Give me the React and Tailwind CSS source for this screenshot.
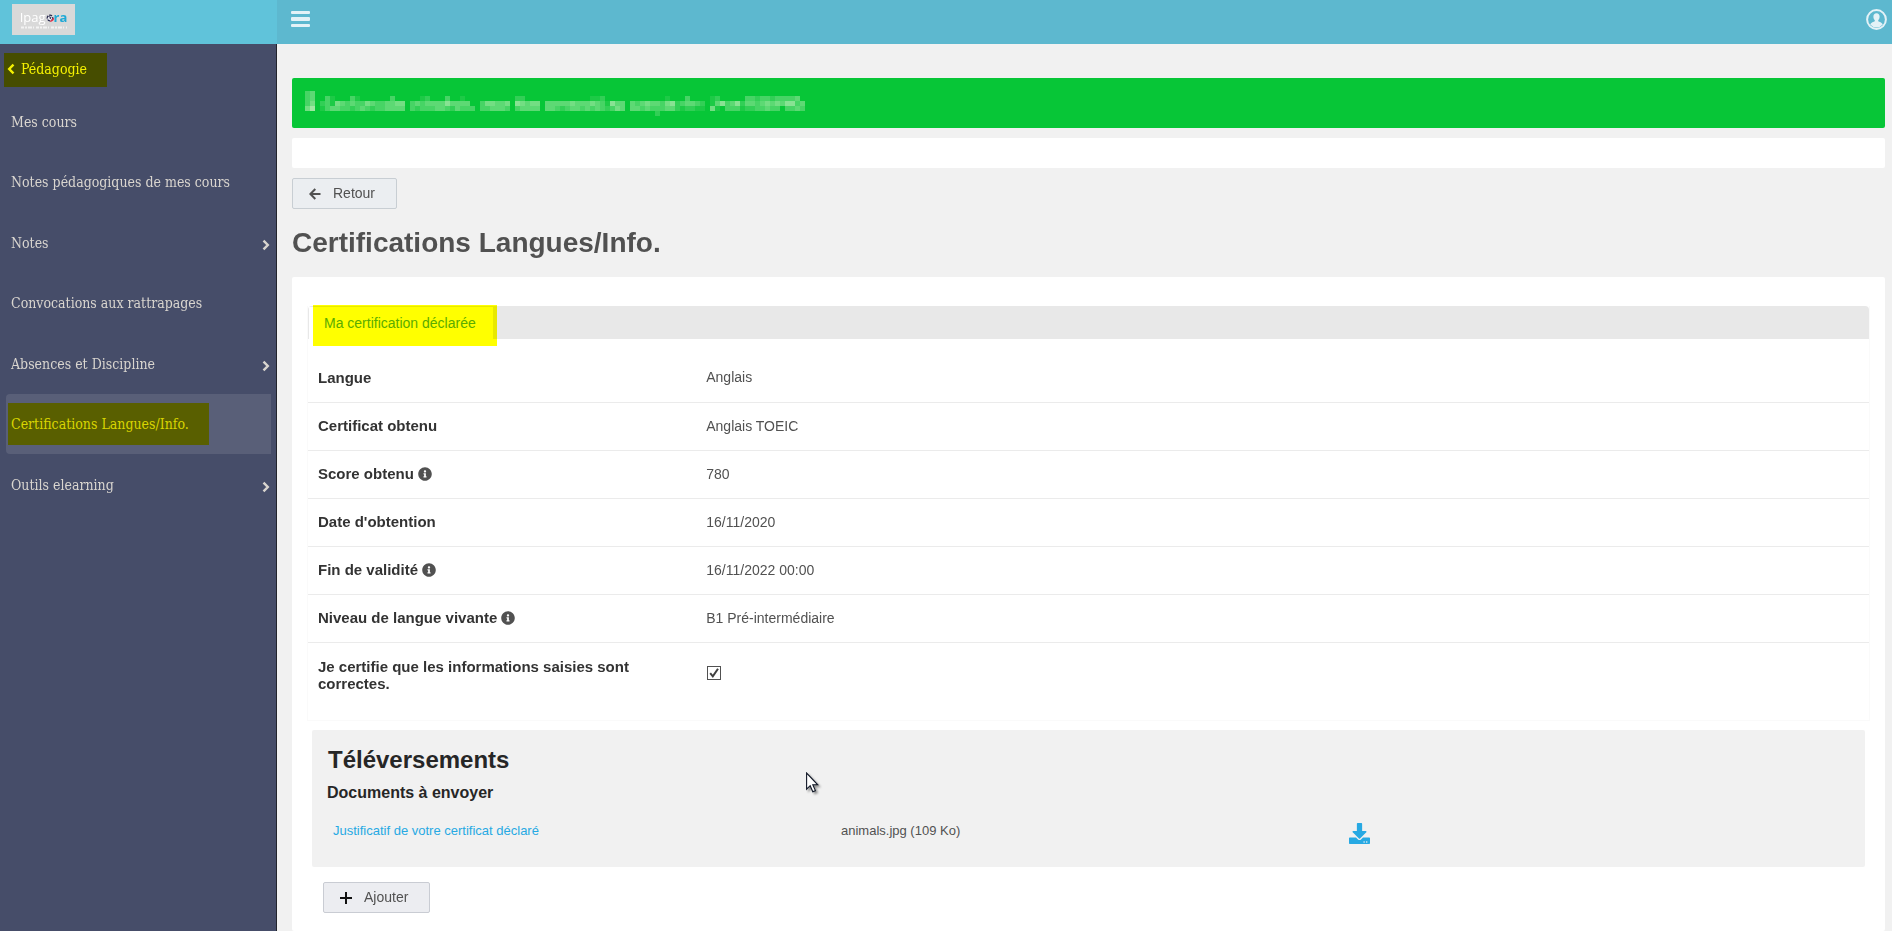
import React, { useState } from 'react'
import { FaDownload, FaInfoCircle } from 'react-icons/fa';

const menuItems = [
    { name: 'Mes cours' },
    { name: 'Notes pédagogiques de mes cours' },
    { name: 'Notes', hasChildren: true },
    { name: 'Convocations aux rattrapages' },
    { name: 'Absences et Discipline', hasChildren: true },
    { name: 'Certifications Langues/Info.', active: true },
    { name: 'Outils elearning', hasChildren: true },
];

const fields = [
    { label: 'Langue', value: 'Anglais' },
    { label: 'Certificat obtenu', value: 'Anglais TOEIC' },
    { label: 'Score obtenu', value: '780', info: true },
    { label: "Date d'obtention", value: '16/11/2020' },
    { label: 'Fin de validité', value: '16/11/2022 00:00', info: true },
    { label: 'Niveau de langue vivante', value: 'B1 Pré-intermédiaire', info: true },
];

// masked user message, one digit per 5px cell (0 = empty)
const maskedRows = [
    '34',
    '3400310003100000030000012000300100000000002200000000000001120000000000001000300001200000332332333340',
    '3502315434335433445503434444644440035544506545504444454445431644043454435623443201463462443454546634',
    '5701344332343233444403233344324333033444303444404432344343432354044343334421221105103331223343303343',
    '0000000000000000000000000000000000000000000000000000000000000000000000200000000000000000000000000000',
];

function MaskedMessage() {
    return (
        <svg width="500" height="25" viewBox="0 0 500 25" shapeRendering="crispEdges" aria-hidden="true">
            {maskedRows.map((row, y) => row.split('').map((level, x) => (
                level > 0 && <rect key={`${x}-${y}`} x={x * 5} y={y * 5} width="5" height="5" fill="#dff5d0" opacity={level * 0.1} />
            )))}
        </svg>
    )
}

function Chevron({ left }) {
    return (
        <svg width="8" height="12" viewBox="0 0 8 12" fill="none" stroke="currentColor" strokeWidth="2.4">
            <path d={left ? 'M6.5 1.7 2.2 6l4.300 4.300' : 'M1.500 1.700 5.800 6l-4.300 4.300'} />
        </svg>
    )
}

function Logo() {
    return (
        <a href="#" className="flex h-[31px] w-[63px] flex-col items-center bg-[#d9d9d9] pt-1">
            <span className="flex items-center font-['Open_Sans'] text-[13px] leading-[18px] font-medium text-white">
                Ipag
                <svg width="8" height="10" viewBox="0 0 8 10">
                    <circle cx="4" cy="6" r="2.8" fill="#e9e9ee" stroke="#25264a" strokeWidth="1.2" strokeDasharray="3 1" />
                    <path d="M2.5 4.5 5 5.5 4 7" stroke="#25264a" fill="none" />
                    <path d="M4.2 9.2A3 3 0 0 0 7.300 6" stroke="#e0354c" strokeWidth="1.5" fill="none" />
                </svg>
                <span className="font-bold text-[#1fa9d6]">ra</span>
            </span>
            <svg width="46" height="3" viewBox="0 0 46 3">
                <path d="M0 1.5H46" stroke="#fff" strokeWidth="2" strokeDasharray="3 1 2 1 4 1 1 2" opacity=".7" />
            </svg>
        </a>
    )
}

function Sidebar() {
    return (
        <nav className="w-[277px] shrink-0 border-r border-[#22242c] bg-[#464d69] font-['DejaVu_Serif_Condensed','DejaVu_Serif',serif] text-[14px] leading-5 text-[#d9d5cf]">
            <a href="#" className="relative mt-[9px] ml-1 flex h-[34px] w-[103px] items-center gap-[6px] pb-[2px] pl-[3px] text-[#f4f0e8]">
                <Chevron left />
                <span>Pédagogie</span>
                <span className="absolute inset-0 bg-[#ff0] mix-blend-multiply"></span>
            </a>
            <ul className="mt-[5px] pr-[5px] pl-[6px]">
                {menuItems.map(item => (
                    <li key={item.name}>
                        {item.active ? (
                            <a href="#" className="relative flex h-[60px] items-center rounded-l bg-[#595f78] pl-[5px]">
                                {item.name}
                                <span className="absolute top-[9px] left-[2px] h-[42px] w-[201px] bg-[#ff0] mix-blend-multiply"></span>
                            </a>
                        ) : (
                            <a href="#" className={item.hasChildren ? 'flex h-[61px] items-center justify-between pr-px pl-[5px]' : 'flex h-[60px] items-center pl-[5px]'}>
                                {item.name}
                                {item.hasChildren && <span className="pt-[5px]"><Chevron /></span>}
                            </a>
                        )}
                    </li>
                ))}
            </ul>
        </nav>
    )
}

function Header() {
    return (
        <header className="flex h-11 bg-[#5db8cf]">
            <div className="w-[277px] shrink-0 bg-[#60c3da] pt-1 pl-3">
                <Logo />
            </div>
            <div className="flex flex-1 items-start justify-between pt-[9px] pr-[5px] pl-[14px] text-[#e3f2f7]">
                <button aria-label="Menu">
                    <svg width="19" height="20" viewBox="0 0 19 20" fill="currentColor">
                        <rect y="2" width="19" height="3" rx="1" />
                        <rect y="8" width="19" height="4" rx="1" />
                        <rect y="15" width="19" height="3" rx="1" />
                    </svg>
                </button>
                <button aria-label="Mon compte">
                    <svg width="21" height="21" viewBox="0 0 21 21">
                        <circle cx="10.5" cy="10.5" r="9.4" fill="none" stroke="currentColor" strokeWidth="2" />
                        <path d="M10.5 4.2c2 0 3.1 1.400 3.100 3.400 0 1.600-.6 2.900-1.400 3.600v1c1 .7 3.900 1.100 4.600 3.300a8.200 8.200 0 0 1-12.600 0c.7-2.200 3.600-2.600 4.600-3.300v-1c-.8-.7-1.400-2-1.400-3.600 0-2 1.100-3.400 3.100-3.400z" fill="currentColor" />
                    </svg>
                </button>
            </div>
        </header>
    )
}

function Uploads() {
    return (
        <section className="relative mx-5 mt-[9px] h-[137px] rounded-xs bg-[#f1f1f1] pt-4 pr-4 pl-[13px] text-[#262626]">
            <h2 className="pl-[3px] text-[24px] leading-7 font-bold">Téléversements</h2>
            <h3 className="mt-[9px] pl-0.5 text-[16px] leading-5 font-bold">Documents à envoyer</h3>
            <div className="mt-4 grid grid-cols-3 text-[13px] leading-6">
                <a href="#" className="pl-2 text-[#27a9e3]">Justificatif de votre certificat déclaré</a>
                <span className="pl-2 text-[#515151]">animals.jpg (109 Ko)</span>
                <a href="#" aria-label="Télécharger" className="pt-1 pl-2 text-[#27a9e3]"><FaDownload size={21} /></a>
            </div>
            {/* mouse pointer */}
            <svg className="absolute top-[42px] left-[494px] drop-shadow-[2px_2px_1px_rgba(0,0,0,0.4)]" width="13" height="21" viewBox="0 0 13 21">
                <path d="M.6 1v16.200l3.600-3.500 2.600 6 2.600-1.100-2.600-5.800h5z" fill="#fff" stroke="#111827" strokeWidth="1.100" />
            </svg>
        </section>
    )
}

function App() {
    const [certified, setCertified] = useState(true);

    return (
        <div className="flex min-h-screen flex-col bg-[#f1f1f1] font-['Liberation_Sans',Arial,sans-serif] text-[14px] text-[#515151]">
            <Header />
            <div className="flex flex-1">
                <Sidebar />
                <main className="flex min-w-0 flex-1 flex-col pt-[34px] pr-[7px] pl-[15px]">
                    <div className="h-[50px] overflow-hidden rounded-xs bg-[#07c637] pt-[13px] pl-[13px]">
                        <MaskedMessage />
                    </div>
                    <div className="mt-[10px] h-[30px] rounded-xs bg-white"></div>
                    <button className="mt-[10px] flex h-[31px] w-[105px] items-center gap-3 rounded-xs border border-[#c8ced3] bg-[#ebeef1] pl-4">
                        <svg width="12" height="12" viewBox="0 0 12 12" fill="none" stroke="currentColor" strokeWidth="2">
                            <path d="M11.500 6H1.500M6.300 1 1.400 6l4.900 5" />
                        </svg>
                        Retour
                    </button>
                    <h1 className="mt-4 text-[28px] leading-9 font-bold">Certifications Langues/Info.</h1>

                    <div className="mt-4 flex-1 rounded-xs bg-white pt-[29px]">
                        <div className="mx-[15px] border-x border-b border-[#fafafa] pb-4">
                            <div role="tablist" className="flex h-[33px] rounded-t bg-[#e8e8e8] pt-px pl-px">
                                <button role="tab" aria-selected="true" className="relative w-[184px] bg-white pl-[15px] text-left text-[#5aace6]">
                                    Ma certification déclarée
                                    <span className="absolute -top-[2px] -right-1 h-[41px] w-[184px] bg-[#ff0] mix-blend-multiply"></span>
                                </button>
                            </div>
                            <table className="mt-[15px] w-full table-fixed">
                                <tbody>
                                    {fields.map(field => (
                                        <tr key={field.label} className="h-12 border-b border-[#ebebeb]">
                                            <th scope="row" className="w-1/4 pl-[10px] text-left text-[15px] text-[#333]">
                                                <span className="flex items-center gap-1">
                                                    {field.label}
                                                    {field.info && <FaInfoCircle size={14} color="#515151" />}
                                                </span>
                                            </th>
                                            <td className="pl-2">{field.value}</td>
                                        </tr>
                                    ))}
                                    <tr className="h-[62px]">
                                        <th scope="row" className="pl-[10px] text-left text-[15px] leading-[17px] text-[#333]">
                                            <label htmlFor="certified" className="block pt-1">Je certifie que les informations saisies sont correctes.</label>
                                        </th>
                                        <td className="pl-[9px]">
                                            <span className="relative block size-[14px]">
                                                <input id="certified" type="checkbox" checked={certified} onChange={() => setCertified(!certified)} className="block size-[14px] appearance-none border border-[#515151] bg-white" />
                                                {certified && (
                                                    <svg className="pointer-events-none absolute inset-0" width="14" height="14" viewBox="0 0 14 14" fill="none" stroke="#404040" strokeWidth="2">
                                                        <path d="M3.200 7.200 5.800 10.300 11 2.800" />
                                                    </svg>
                                                )}
                                            </span>
                                        </td>
                                    </tr>
                                </tbody>
                            </table>
                        </div>
                        <Uploads />
                        <button className="mt-[15px] ml-[31px] flex h-[31px] w-[107px] items-center gap-3 rounded-xs border border-[#c9ccd3] bg-[#ecedf1] pl-4">
                            <svg width="12" height="12" viewBox="0 0 12 12" fill="none" stroke="#111" strokeWidth="2">
                                <path d="M6 0v12M0 6h12" />
                            </svg>
                            Ajouter
                        </button>
                    </div>
                </main>
            </div>
        </div>
    )
}

export default App
